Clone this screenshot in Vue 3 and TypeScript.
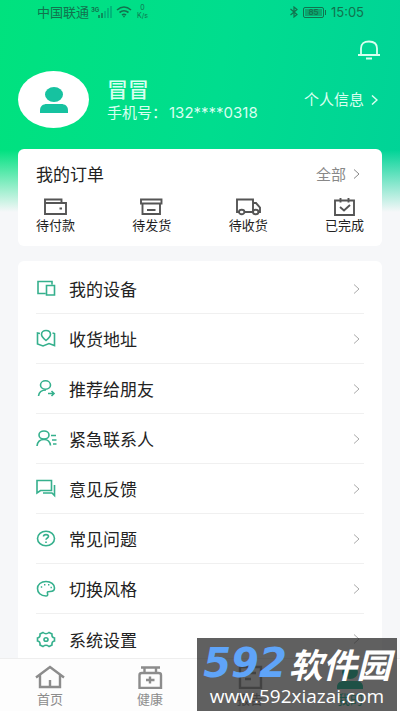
<script setup lang="ts">
interface Entry {
  label: string
  paths: string[]
}

const orders: Entry[] = [
  { label: '待付款', paths: ['M2 5V1.500H18.500V5M2 5H23V16H2ZM16.500 10.500H19'] },
  { label: '待发货', paths: ['M2 1.500H22.500V5.500H2ZM3.500 5.500V16H21V5.500M8 12H16.500'] },
  {
    label: '待收货',
    paths: [
      'M3 14H1V1.500H17V14H8.500M17 5H20L24 9.500V14H22.500',
      'M3 14a2.700 2.300 0 1 0 5.400 0a2.700 2.300 0 1 0 -5.400 0M17 14a2.700 2.300 0 1 0 5.400 0a2.700 2.300 0 1 0 -5.400 0',
    ],
  },
  { label: '已完成', paths: ['M3 2.500H22V17H3ZM8.500 0V4.500M16.500 0V4.500M8 9L12 12.500L18 7'] },
]

const menu: Entry[] = [
  { label: '我的设备', paths: ['M9.500 14.500H2V2.500H16V5.500M10.500 6.500H18.500V16H10.500Z'] },
  {
    label: '收货地址',
    paths: [
      'M4 4.500L1.500 4V15L7 17L13 14.500L18.500 16.500V4.500L16.500 4',
      'M10 11.500C7 9 5.500 7.500 5.500 5.500C5.500 3 7.500 1.500 10 1.500S14.500 3 14.500 5.500C14.500 7.500 13 9 10 11.500Z',
    ],
  },
  {
    label: '推荐给朋友',
    paths: [
      'M4.500 6a5 4.200 0 1 0 10 0a5 4.200 0 1 0 -10 0',
      'M2.500 17C3 13 5.500 11 10 11M12 14.500H18M15.500 12L18 14.500L15.500 17',
    ],
  },
  {
    label: '紧急联系人',
    paths: [
      'M3 6a5 4 0 1 0 10 0a5 4 0 1 0 -10 0',
      'M1 17C1.500 12.500 4 10.500 8 10.500S14 12.500 14.500 16.500M15 6.500H20M16 11H20.500M17 15H20.500',
    ],
  },
  { label: '意见反馈', paths: ['M1 1.500H15.500V11.500H4.500L1 14ZM18.500 6V16.500L16 14H7'] },
  {
    label: '常见问题',
    paths: [
      'M1.500 9.500a8.500 7.300 0 1 0 17 0a8.500 7.300 0 1 0 -17 0',
      'M7.500 7.500C7.500 5 12.500 5 12.500 7.500C12.500 9 10 9 10 10.800M10 12.600V14',
    ],
  },
  {
    label: '切换风格',
    paths: [
      'M10 17C4.500 17 1.500 13.500 1.500 9.500S5 2.500 10 2.500S18.500 5.500 18.500 9C18.500 11.500 17 12.500 14 12.500C11.500 12.500 11 13 11.500 14.500C12 16 11.500 17 10 17Z',
      'M4.800 8H6.200M8 5.800H9.400M12 5.800H13.400M14.500 8.500H15.900',
    ],
  },
  {
    label: '系统设置',
    paths: [
      'M7 2.500Q10 5 13 2.500L16 4Q15.500 7.500 18.500 8V11Q15.500 11.500 16 15L13 16.500Q10 14 7 16.500L4 15Q4.500 11.500 1.500 11V8Q4.500 7.500 4 4Z',
      'M8 9.500a2 1.800 0 1 0 4 0a2 1.800 0 1 0 -4 0',
    ],
  },
]
</script>

<template>
  <div class="screen">
    <main class="content">
      <header class="header">
        <div class="status">
          <div class="status-group">
            <span>中国联通</span>
            <svg class="signal" viewBox="0 0 22 12" aria-hidden="true">
              <text class="signal-text" x="0" y="6">3G</text>
              <path d="M8 12V9M11 12V7" stroke="#12724e" stroke-width="1.500" />
              <path d="M14 12V5M17 12V2M20 12V0" stroke="#00b87b" stroke-width="2" />
            </svg>
            <svg class="wifi" viewBox="0 0 16 12" fill="none" stroke="#12724e" stroke-width="1.600" aria-hidden="true">
              <path d="M1 4Q8 -2 15 4M3.500 6.500Q8 3 12.500 6.500M6 9Q8 7.500 10 9M7.200 10.500H8.800" />
            </svg>
            <span class="speed"><span>0</span><span>K/s</span></span>
          </div>
          <div class="status-group">
            <svg class="bluetooth" viewBox="0 0 10 12" fill="none" stroke="#12724e" stroke-width="1.200" aria-hidden="true">
              <path d="M1.500 3L8 8.500L5 11V1L8 3.500L1.500 9" />
            </svg>
            <span class="battery"><span class="battery-level">85</span></span>
            <span class="clock">15:05</span>
          </div>
        </div>

        <div class="tools">
          <button class="bell" type="button" aria-label="通知">
            <svg viewBox="0 0 22 20" fill="none" stroke="currentColor" stroke-width="1.800">
              <path d="M0 15H22M3 15V8.500C3 3.500 6 1.500 11 1.500S19 3.500 19 8.500V15M8 18.500H14" />
            </svg>
          </button>
        </div>

        <section class="profile">
          <div class="avatar">
            <svg viewBox="0 0 28 26" fill="#16c2a0" aria-hidden="true">
              <ellipse cx="14" cy="7.500" rx="9" ry="7.500" />
              <path d="M0 26V23.500C0 19 3 17 7 17H21C25 17 28 19 28 23.500V26Z" />
            </svg>
          </div>
          <div class="identity">
            <h1 class="name">冒冒</h1>
            <p class="phone">手机号：<span class="number">132****0318</span></p>
          </div>
          <a class="info" href="#">
            个人信息
            <svg class="chevron" viewBox="0 0 7 10" fill="none" stroke="currentColor"><path d="M1 0.500L6 5L1 9.500" /></svg>
          </a>
        </section>
      </header>

      <section class="card orders">
        <div class="orders-head">
          <h2 class="title">我的订单</h2>
          <a class="all" href="#">
            全部
            <svg class="chevron" viewBox="0 0 7 10" fill="none" stroke="currentColor"><path d="M1 0.500L6 5L1 9.500" /></svg>
          </a>
        </div>
        <div class="order-list">
          <a v-for="item in orders" :key="item.label" class="order" href="#">
            <svg class="order-icon" viewBox="0 0 25 18" fill="none" stroke="#555" stroke-width="1.900" aria-hidden="true">
              <path v-for="d in item.paths" :key="d" :d="d" />
            </svg>
            <span>{{ item.label }}</span>
          </a>
        </div>
      </section>

      <nav class="card menu">
        <a v-for="item in menu" :key="item.label" class="row" href="#">
          <svg class="row-icon" viewBox="0 0 21 19" fill="none" stroke="#35b08d" stroke-width="1.600" aria-hidden="true">
            <path v-for="d in item.paths" :key="d" :d="d" />
          </svg>
          <span class="row-label">{{ item.label }}</span>
          <svg class="chevron" viewBox="0 0 7 10" fill="none" stroke="currentColor"><path d="M1 0.500L6 5L1 9.500" /></svg>
        </a>
      </nav>
    </main>

    <nav class="tabs">
      <a class="tab" href="#">
        <svg viewBox="0 0 30 24" fill="none" stroke="currentColor" stroke-width="2.400" aria-hidden="true">
          <path d="M1 12.500L15 2L29 12.500M5 10V22H25V10M15 22V15" />
        </svg>
        <span>首页</span>
      </a>
      <a class="tab" href="#">
        <svg viewBox="0 0 30 24" fill="none" stroke="currentColor" stroke-width="2.400" aria-hidden="true">
          <path d="M6 2.500H25M9.500 2.500V7M21 2.500V7M7 8H23.500Q26 8 26 10V23H4.500V10Q4.500 8 7 8ZM15 11.500V18.500M11 15H19.500" />
        </svg>
        <span>健康</span>
      </a>
      <a class="tab" href="#">
        <svg viewBox="0 0 30 24" fill="none" stroke="currentColor" stroke-width="2.400" aria-hidden="true">
          <path d="M5 2H26V23H5ZM10 8H21M10 14H16" />
        </svg>
        <span>报告</span>
      </a>
      <a class="tab active" href="#">
        <svg viewBox="0 0 30 24" fill="currentColor" aria-hidden="true">
          <ellipse cx="15" cy="7" rx="8" ry="7" />
          <path d="M2 24V22C2 18 5 16 9 16H21C25 16 28 18 28 22V24Z" />
        </svg>
        <span>我的</span>
      </a>
    </nav>

    <aside class="watermark">
      <div class="brand"><span class="brand-number">592</span><span class="brand-name">软件园</span></div>
      <div class="site">www.592xiazai.com</div>
    </aside>
  </div>
</template>

<style>
body {
  margin: 0;
  background: #f6f7f9;
}
</style>

<style scoped>
.screen {
  position: relative;
  display: flex;
  flex-direction: column;
  height: 100vh;
  overflow: hidden;
  color: #222;
  background: #f6f7f9;
  font-family: Inter, "Noto Sans CJK SC", sans-serif;
}
a {
  color: inherit;
  text-decoration: none;
}
h1,
h2,
p {
  margin: 0;
  font-weight: 400;
}
svg {
  display: block;
  flex: none;
}
.content {
  flex: 1;
  min-height: 0;
  overflow-y: auto;
  scrollbar-width: none;
  background:
    linear-gradient(to bottom, rgba(246, 247, 249, 0) 150px, rgba(246, 247, 249, 0.65) 190px, #f6f7f9 212px),
    linear-gradient(100deg, #00e27e 0%, #00dd8e 45%, #00cf9b 100%);
}
.header {
  display: flex;
  flex-direction: column;
  height: 149px;
  padding: 0 18px;
  box-sizing: border-box;
  color: #d9fff0;
}
.status {
  display: flex;
  justify-content: space-between;
  height: 24px;
  padding: 0 18px 0 19px;
  color: #12724e;
  font-size: 13px;
  line-height: 24px;
}
.status-group {
  display: flex;
  align-items: center;
}
.signal {
  width: 22px;
  height: 12px;
  margin-left: 2px;
}
.signal-text {
  font-size: 6px;
  font-weight: 700;
  fill: #12724e;
}
.wifi {
  width: 16px;
  height: 12px;
  margin-left: 3px;
}
.speed {
  display: flex;
  flex-direction: column;
  align-items: center;
  margin-left: 5px;
  font-size: 7px;
  line-height: 8px;
}
.bluetooth {
  width: 10px;
  height: 12px;
  margin-right: 4px;
}
.battery {
  position: relative;
  display: flex;
  width: 21px;
  height: 11px;
  margin-right: 7px;
  padding: 1px;
  box-sizing: border-box;
  border: 1px solid #12724e;
  border-radius: 2px;
}
.battery::after {
  position: absolute;
  top: 2px;
  right: -3px;
  width: 1px;
  height: 5px;
  background: #12724e;
  content: "";
}
.battery-level {
  flex: 1;
  background: #0aa86f;
  font-size: 8px;
  font-weight: 600;
  line-height: 7px;
  text-align: center;
}
.clock {
  font-size: 13px;
}
.tools {
  display: flex;
  justify-content: flex-end;
  height: 47px;
  padding: 16px 2px 0;
  box-sizing: border-box;
}
.bell {
  width: 22px;
  height: 20px;
  padding: 0;
  border: 0;
  background: none;
  color: #d9fff0;
}
.profile {
  display: flex;
  align-items: center;
  height: 57px;
}
.avatar {
  display: flex;
  align-items: center;
  justify-content: center;
  width: 71px;
  height: 57px;
  border-radius: 50%;
  background: #fff;
}
.avatar svg {
  width: 28px;
  height: 26px;
}
.identity {
  flex: 1;
  margin-left: 18px;
}
.name {
  font-size: 21px;
  font-weight: 500;
  line-height: 26px;
}
.phone {
  font-size: 15px;
  line-height: 20px;
  white-space: nowrap;
}
.number {
  margin-left: 2px;
}
.info {
  display: flex;
  align-items: center;
  gap: 7px;
  margin-right: 4px;
  font-size: 15px;
  line-height: 20px;
}
.chevron {
  width: 7px;
  height: 10px;
}
.info .chevron {
  stroke-width: 1.5px;
}
.card {
  margin: 0 18px;
  border-radius: 6px;
  background: #fff;
}
.orders {
  padding: 12px 18px;
}
.orders-head {
  display: flex;
  align-items: center;
  justify-content: space-between;
  height: 25px;
}
.title {
  font-size: 17px;
}
.all {
  display: flex;
  align-items: center;
  gap: 7px;
  margin-right: 4px;
  color: #888;
  font-size: 15px;
}
.order-list {
  display: flex;
  justify-content: space-between;
  margin-top: 12px;
}
.order {
  display: flex;
  flex-direction: column;
  align-items: center;
  font-size: 13px;
  line-height: 18px;
}
.order-icon {
  width: 25px;
  height: 18px;
}
.menu {
  margin-top: 15px;
  padding: 3px 18px 0;
}
.row {
  display: flex;
  align-items: center;
  height: 50px;
  padding-right: 4px;
  box-sizing: border-box;
  border-bottom: 1px solid #f0f0f0;
  color: #aaa;
}
.row:last-child {
  border-bottom: 0;
}
.row-icon {
  width: 21px;
  height: 19px;
}
.row-label {
  flex: 1;
  margin-left: 12px;
  color: #222;
  font-size: 17px;
}
.tabs {
  display: flex;
  height: 53px;
  box-sizing: border-box;
  border-top: 1px solid #eee;
  background: #fdfdfd;
}
.tab {
  display: flex;
  flex: 1;
  flex-direction: column;
  align-items: center;
  padding-top: 6px;
  color: #8c8c8c;
  font-size: 13px;
  line-height: 20px;
}
.tab svg {
  width: 30px;
  height: 24px;
}
.tab.active {
  color: #00c49a;
}
.watermark {
  position: absolute;
  right: 3px;
  bottom: 0;
  width: 200px;
  height: 73px;
  overflow: hidden;
  background: rgba(40, 40, 40, 0.74);
  color: #fff;
  white-space: nowrap;
}
.brand {
  display: flex;
  align-items: center;
  justify-content: center;
  height: 44px;
  padding-top: 6px;
  box-sizing: border-box;
  font-weight: 700;
  font-style: italic;
}
.brand-number {
  color: #5fa4f8;
  font-family: "DejaVu Sans", sans-serif;
  font-size: 40px;
}
.brand-name {
  margin-left: 2px;
  font-family: "Noto Sans CJK SC", sans-serif;
  font-size: 34px;
}
.site {
  font-family: "Open Sans", sans-serif;
  font-size: 19px;
  line-height: 28px;
  text-align: center;
}
</style>
